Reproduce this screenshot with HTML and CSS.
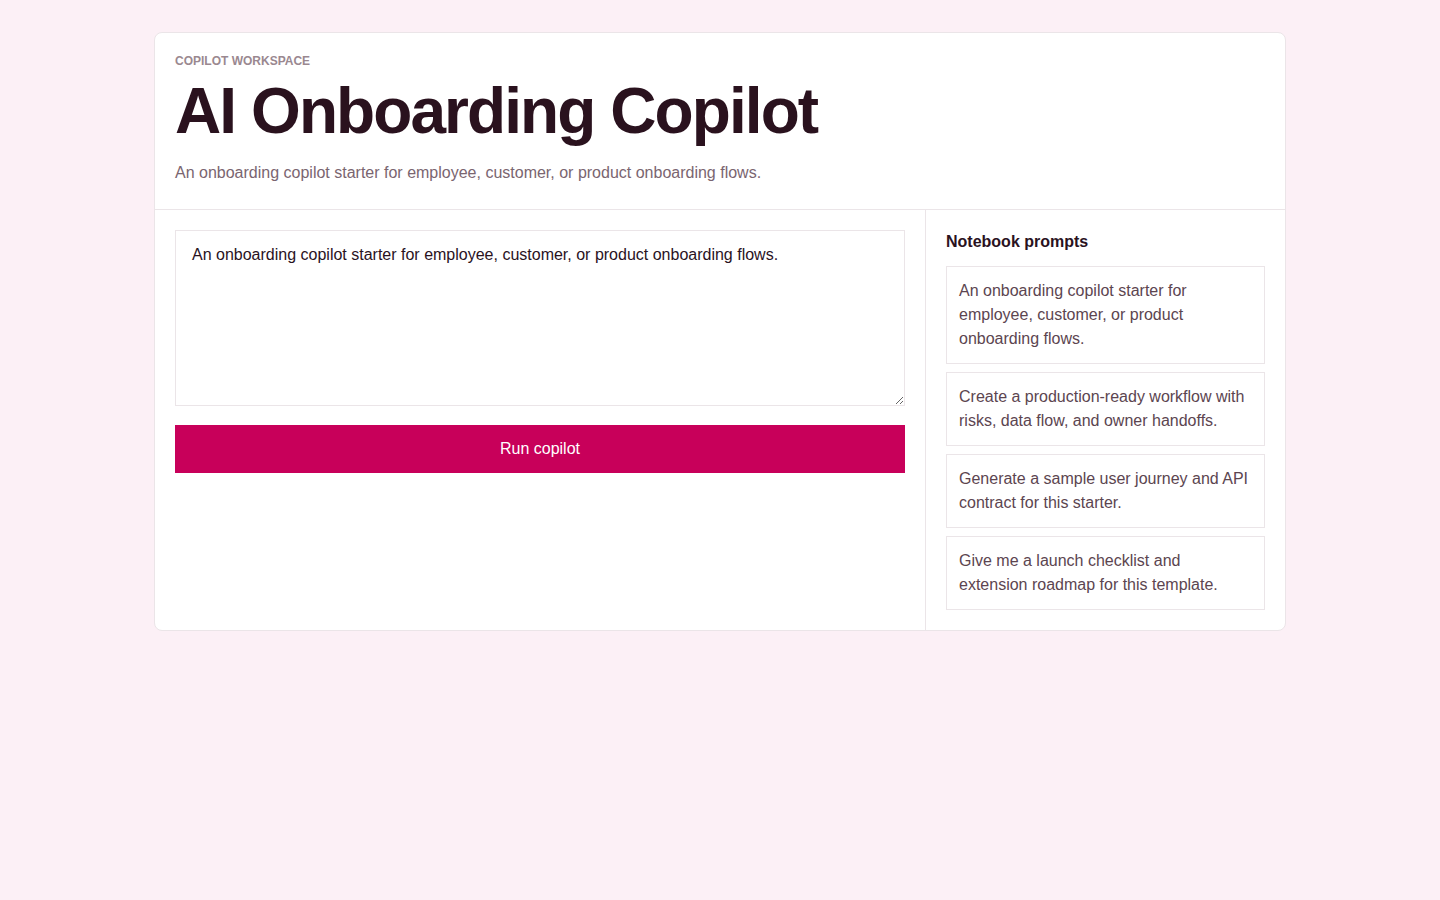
FILE: index.html
```html
<!DOCTYPE html>
<html lang="en">
<head>
<meta charset="utf-8">
<title>AI Onboarding Copilot</title>
<link rel="stylesheet" href="styles.css">
</head>
<body>
<main class="card">
  <header class="head">
    <div class="eyebrow">Copilot workspace</div>
    <h1 class="title">AI Onboarding Copilot</h1>
    <p class="subtitle">An onboarding copilot starter for employee, customer, or product onboarding flows.</p>
  </header>
  <div class="body">
    <section class="compose">
      <textarea class="input">An onboarding copilot starter for employee, customer, or product onboarding flows.</textarea>
      <button class="run" type="button">Run copilot</button>
    </section>
    <aside class="side">
      <h2 class="side-title">Notebook prompts</h2>
      <div class="prompts">
        <div class="prompt">An onboarding copilot starter for employee, customer, or product onboarding flows.</div>
        <div class="prompt">Create a production-ready workflow with risks, data flow, and owner handoffs.</div>
        <div class="prompt">Generate a sample user journey and API contract for this starter.</div>
        <div class="prompt">Give me a launch checklist and extension roadmap for this template.</div>
      </div>
    </aside>
  </div>
</main>
</body>
</html>
```
FILE: styles.css
```css
* { box-sizing: border-box; }
html, body { margin: 0; }
body {
  background: #fcf0f6;
  padding: 32px 0;
  font-family: "Liberation Sans", Arial, sans-serif;
  color: #2a121e;
}
.card {
  width: 1132px;
  margin: 0 auto;
  background: #ffffff;
  border: 1px solid #ebe5e8;
  border-radius: 8px;
}
.head {
  padding: 20px 20px 24px;
  border-bottom: 1px solid #ebe5e8;
}
.eyebrow {
  font-size: 12px;
  line-height: 16px;
  font-weight: 700;
  text-transform: uppercase;
  color: #9a8890;
}
.title {
  margin: 6px 0 0;
  font-size: 64px;
  line-height: 72px;
  font-weight: 700;
  letter-spacing: -0.03em;
  color: #2a121e;
}
.subtitle {
  margin: 14px 0 0;
  font-size: 16px;
  line-height: 24px;
  color: #7a6570;
}
.body {
  display: grid;
  grid-template-columns: 1fr 360px;
}
.compose {
  padding: 20px;
  display: flex;
  flex-direction: column;
  gap: 19px;
}
.input {
  display: block;
  width: 100%;
  height: 176px;
  padding: 12px 16px;
  border: 1px solid #ebe5e8;
  border-radius: 0;
  font-family: "Liberation Sans", Arial, sans-serif;
  font-size: 16px;
  line-height: 24px;
  color: #2a121e;
  background: #fff;
  resize: vertical;
  outline: none;
}
.run {
  display: block;
  width: 100%;
  height: 48px;
  border: 0;
  border-radius: 0;
  background: #c8005a;
  color: #ffffff;
  font-family: "Liberation Sans", Arial, sans-serif;
  font-size: 16px;
}
.side {
  border-left: 1px solid #ebe5e8;
  padding: 20px;
}
.side-title {
  margin: 0 0 12px;
  font-size: 16px;
  line-height: 24px;
  font-weight: 700;
  color: #2a121e;
}
.prompts {
  display: flex;
  flex-direction: column;
  gap: 8px;
}
.prompt {
  border: 1px solid #ebe5e8;
  padding: 12px;
  font-size: 16px;
  line-height: 24px;
  color: #5c4550;
}
```
